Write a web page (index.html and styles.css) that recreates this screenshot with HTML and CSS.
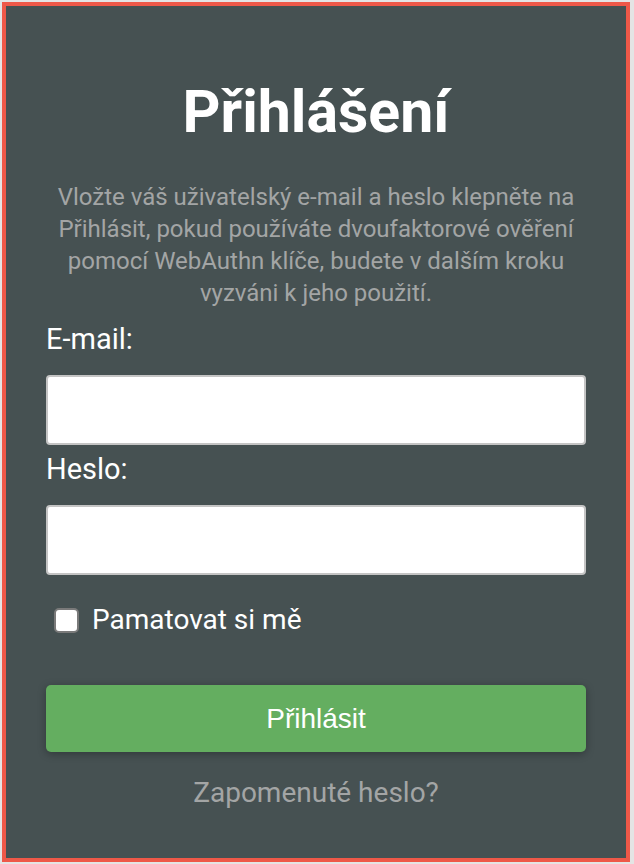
FILE: index.html
```html
<!DOCTYPE html>
<html lang="cs">
<head>
<meta charset="utf-8">
<title>Přihlášení</title>
<link rel="stylesheet" href="styles.css">
</head>
<body>
<div class="frame">
  <main class="login">
    <h1 class="title">Přihlášení</h1>
    <p class="desc">Vložte váš uživatelský e-mail a heslo klepněte na Přihlásit, pokud používáte dvoufaktorové ověření pomocí WebAuthn klíče, budete v dalším kroku vyzváni k jeho použití.</p>
    <form class="form">
      <label class="label" for="email">E-mail:</label>
      <input class="input" id="email" type="email">
      <label class="label label-second" for="pass">Heslo:</label>
      <input class="input" id="pass" type="password">
      <label class="remember"><span class="check"></span><span class="remember-text">Pamatovat si mě</span></label>
      <button class="btn" type="button">Přihlásit</button>
      <a class="forgot" href="#">Zapomenuté heslo?</a>
    </form>
  </main>
</div>
</body>
</html>
```
FILE: styles.css
```css
html, body {
  margin: 0;
  padding: 0;
}
body {
  background: #e4e4e4;
  width: 634px;
  height: 864px;
  padding: 2px;
  box-sizing: border-box;
  font-family: Roboto, "Noto Sans", sans-serif;
}
.frame {
  width: 628px;
  height: 860px;
  box-sizing: border-box;
  border: 4px solid #ee5848;
  background: #465152;
  padding: 74px 40px 0;
}
.login {
  display: flex;
  flex-direction: column;
}
.title {
  margin: 0;
  font-size: 59px;
  line-height: 64px;
  font-weight: 700;
  color: #ffffff;
  text-align: center;
}
.desc {
  margin: 37px 0 0;
  font-size: 24px;
  line-height: 32px;
  color: #a3a5a5;
  text-align: center;
}
.form {
  display: flex;
  flex-direction: column;
  margin-top: 13px;
}
.label {
  font-size: 29px;
  line-height: 35px;
  color: #ffffff;
  margin-bottom: 18px;
}
.label-second {
  margin-top: 7px;
}
.input {
  box-sizing: border-box;
  height: 70px;
  width: 100%;
  margin: 0;
  border: 2px solid #c4c4c4;
  border-radius: 4px;
  background: #ffffff;
}
.remember {
  display: flex;
  align-items: center;
  gap: 13px;
  margin-top: 29px;
  padding-left: 8px;
  color: #ffffff;
}
.check {
  box-sizing: border-box;
  width: 25px;
  height: 25px;
  border: 2px solid #7a7a7a;
  border-radius: 5px;
  background: #ffffff;
}
.remember-text {
  font-size: 28px;
  line-height: 32px;
}
.btn {
  margin-top: 49px;
  height: 67px;
  border: none;
  border-radius: 5px;
  background: #64ae60;
  color: #ffffff;
  font-family: "Liberation Sans", Arial, sans-serif;
  font-size: 28px;
  box-shadow: 0 2px 8px rgba(0, 0, 0, 0.3);
}
.forgot {
  align-self: center;
  margin-top: 24px;
  font-size: 28px;
  line-height: 34px;
  color: #a3a5a5;
  text-decoration: none;
}
```
